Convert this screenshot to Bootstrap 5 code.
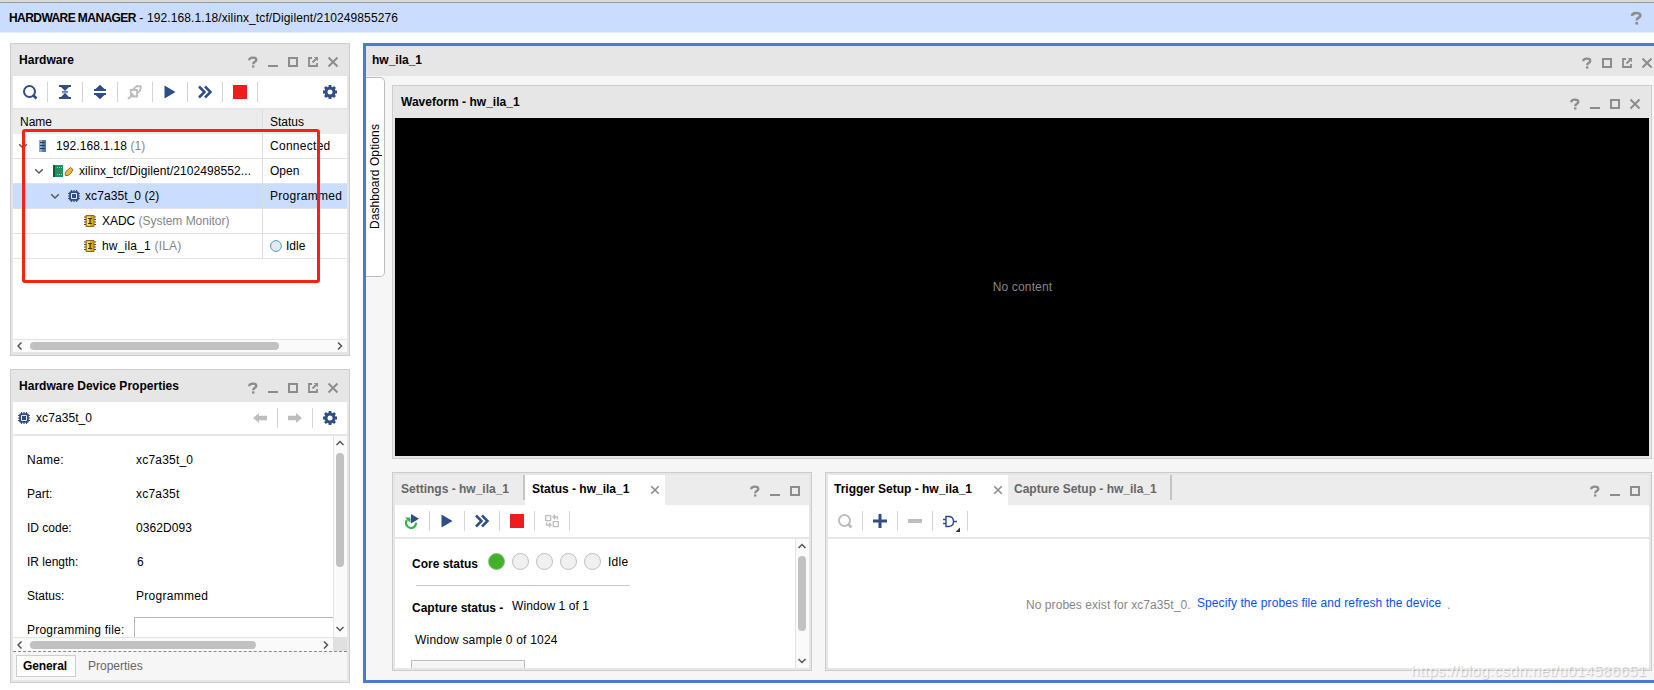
<!DOCTYPE html>
<html lang="en">
<head>
<meta charset="utf-8">
<title>Hardware Manager</title>
<link href="https://cdn.jsdelivr.net/npm/bootstrap@5.3.0/dist/css/bootstrap.min.css" rel="stylesheet">
<script src="https://cdn.jsdelivr.net/npm/bootstrap@5.3.0/dist/js/bootstrap.bundle.min.js"></script>
<style>
body{width:1654px;height:690px;overflow:hidden;background:#fff;color:#000;font:12px/16px "Liberation Sans",Arial,sans-serif}
svg{display:block;flex:none}
.topline{height:2px;background:#d9d9d9}
.topbar{height:31px;background:#cbddfe;border-top:1px solid #999;box-shadow:inset 0 -1px #e6eefc;padding:0 10px 1px 9px;letter-spacing:.11px}
.topbar b{letter-spacing:-.57px}
.workarea{padding:10px 0 0 10px;gap:13px}
.sidecol{width:340px;gap:13px}
.pane{border:1px solid #cdcdcd;background:#e6e6e6;padding:0 2px 2px}
.pane-a{height:313px}.pane-b{height:314px}
.pane-title{height:32px;padding:0 8px 0 6px;font-weight:700;letter-spacing:.02px}
.pane-title>span{padding-bottom:1px}
.winbtns{gap:8px;margin-top:4px;margin-left:auto;color:#8c8c8c}
.tools{height:32px;background:#fff;color:#2f4d86}
.cell{width:35px;height:20px;border-right:1px solid #d4d4d4;display:flex;align-items:center;justify-content:center}
.cell.last{border:0;width:34px}
.rule2{height:2px;background:#e6e6e6}
.off{color:#bdbdbd}
.c1{width:250px;height:100%;border-right:1px solid #dedede}
.c2{padding-left:7px}
.thead-row{height:24px;background:#ececec}
.thead-row .c1{padding-left:7px}
.trow{height:25px;border-bottom:1px solid #e3e3e3}
.trow.sel{background:#cbddfe}
.wide-a{letter-spacing:.08px}.wide-b{letter-spacing:.28px}.wide-c{letter-spacing:.2px}
.g{color:#868686}
.hbar{height:13px;background:#fafafa;border-top:1px solid #e3e3e3;padding:0 4px;color:#555}
.thumb-h{height:8px;margin-left:7px;border-radius:4px;background:#c1c1c1}
.vbar{width:14px;background:#fafafa;border-left:1px solid #e3e3e3;padding:4px 2px 5px 0;color:#555}
.thumb-v{width:8px;margin-top:7px;border-radius:4px;background:#c1c1c1}
.mark-box{position:absolute;left:22px;top:129px;width:298px;height:154px;border:3px solid #ff2012;border-radius:3px}
.prop{height:34px;padding-left:14px}
.prop>span:first-child{width:107px}
.prop>span+span{padding-left:2px}
.field{height:40px;border:1px solid #b5b5b5;border-right:0;align-self:flex-start;margin-top:4px}
.foot{height:29px;border-top:1px dashed #8a8a8a;background:#f6f6f6;padding:3px 3px 0}
.foot .on{width:60px;height:22px;border:1px solid #cdcdcd;background:#fff;font-weight:700;letter-spacing:-.1px;line-height:20px;padding-left:6px}
.foot .un{color:#666;line-height:22px;margin-left:12px}
.mainbox{width:1291px;height:640px;border:3px solid #4a7bce;border-right:0;background:#f6f6f6}
.main-title{height:30px;background:#e6e6e6;padding:0 1px 0 6px;font-weight:700}
.main-title>span{padding-bottom:3px}
.main-title .winbtns{margin-top:3px}
.dash{width:19px;height:200px;margin:1px 1px 0 0;border:1px solid #bdbdbd;border-left:0;border-radius:0 5px 5px 0;background:#fff}
.dash span{writing-mode:vertical-rl;transform:rotate(180deg);letter-spacing:.1px;line-height:18px}
.stack{margin:9px 0 0 6px;width:1260px;gap:13px}
.wave{height:374px}
.wavearea{background:#000;color:#868686;height:338px;letter-spacing:.15px;padding-left:1px}
.low{height:199px;padding-top:2px}
.tabs{height:30px;background:#ececec;font-weight:700}
.tab{height:30px;padding:0 0 2px 6px;display:flex;align-items:center;color:#666}
.tab.on{background:#fff;color:#000}
.tab svg{margin:1px 5px 0 auto;color:#8c8c8c}
.tsep{width:2px;height:25px;background:#c4c4c4}
.tabs .winbtns{margin-right:8px;margin-top:1px}
.led{width:17px;height:17px;border-radius:50%;border:1px solid #bdbdbd;background:#f0f0f0;margin-right:7px}
.led.green{background:#43b02a;border-color:#8fbf85}
.divider{width:214px;height:1px;background:#c8c8c8;margin-left:4px}
.stubbtn{width:114px;height:24px;border:1px solid #bdbdbd;background:#f5f5f5;margin-left:-1px}
.lnk{color:#0a50f0;letter-spacing:.09px}
.wm{position:absolute;left:1411px;top:661px;font-size:15px;line-height:20px;letter-spacing:.43px;color:rgba(255,255,255,.75);text-shadow:1px 1px 1px rgba(120,120,120,.4);white-space:nowrap}
</style>
</head>
<body class="position-relative">
<svg width="0" height="0" class="position-absolute">
<defs>
<symbol id="q" viewBox="0 0 12 12"><path d="M2.200 4.200C2.300 2.300 4 1.700 5.900 1.700C8 1.700 9.300 2.500 9.300 3.900C9.300 5.900 6.200 5.600 6.200 8.200" fill="none" stroke="currentColor" stroke-width="2.300"/><path d="M5 9.400h2.400v2.200H5z" fill="currentColor"/></symbol>
<symbol id="min" viewBox="0 0 12 12"><path d="M1 9h10v2H1z" fill="currentColor"/></symbol>
<symbol id="max" viewBox="0 0 12 12"><path d="M2 2h8v8H2z" fill="none" stroke="currentColor" stroke-width="2"/></symbol>
<symbol id="flt" viewBox="0 0 12 12"><path d="M5 2H2v8h8V7" fill="none" stroke="currentColor" stroke-width="1.800"/><path d="M5.500 6.500L9 3" stroke="currentColor" stroke-width="1.800"/><path d="M6.800 1H11v4.200z" fill="currentColor"/></symbol>
<symbol id="x" viewBox="0 0 12 12"><path d="M1.500 1.500l9 9M10.500 1.500l-9 9" stroke="currentColor" stroke-width="1.900"/></symbol>
<symbol id="lens" viewBox="0 0 16 16"><circle cx="7.500" cy="7.500" r="5.500" fill="none" stroke="currentColor" stroke-width="2"/><path d="M11 11l3.500 3.500" stroke="currentColor" stroke-width="2.600"/></symbol>
<symbol id="gear" viewBox="0 0 16 16"><circle cx="8" cy="8" r="4" fill="none" stroke="currentColor" stroke-width="3"/><path d="M8 1v2.500M8 12.500V15M1 8h2.500M12.500 8H15M3 3l2 2M11 11l2 2M13 3l-2 2M5 11l-2 2" stroke="currentColor" stroke-width="2.800"/></symbol>
<symbol id="play" viewBox="0 0 16 16"><path d="M2.500 1.500L13.500 8 2.500 14.500z" fill="currentColor"/></symbol>
<symbol id="ff" viewBox="0 0 16 16"><path d="M2 2.500L7.500 8 2 13.500M8 2.500L13.500 8 8 13.500" fill="none" stroke="currentColor" stroke-width="2.500"/></symbol>
<symbol id="stop" viewBox="0 0 16 16"><path d="M1 1h14v14H1z" fill="#ee1c1c"/></symbol>
<symbol id="chip" viewBox="0 0 12 12"><path d="M3.500 0v12M6 0v12M8.500 0v12M0 3.500h12M0 6h12M0 8.500h12" stroke="currentColor" stroke-width="1.200"/><rect x="1.200" y="1.200" width="9.600" height="9.600" rx="1.500" fill="currentColor"/><path d="M3.500 3.500h5v5h-5z" fill="none" stroke="#e8eefa" stroke-width="1"/></symbol>
<symbol id="core" viewBox="0 0 12 12"><path d="M0 2h12M0 4.500h12M0 7h12M0 9.500h12" stroke="#4b4430" stroke-width="1"/><path d="M2 .5h8v11H2z" fill="#d6a625" stroke="#8a6a1a" stroke-width="1"/><path d="M3 1.500h3v9H3z" fill="#f6dc74"/><path d="M4 3.500h4M4 8.500h4M6 3.500v5" stroke="#3d2f08" stroke-width="1.200"/></symbol>
<symbol id="chev" viewBox="0 0 10 10"><path d="M1.200 3.200L5 7l3.800-3.800" fill="none" stroke="currentColor" stroke-width="1.400"/></symbol>
<symbol id="arr" viewBox="0 0 14 12"><path d="M0 6l6-5v2.800h8v4.400H6V11z" fill="currentColor"/></symbol>
</defs></svg>

<div class="topline"></div>
<header class="topbar d-flex align-items-center justify-content-between">
  <div style="white-space:pre"><b>HARDWARE MANAGER</b> - 192.168.1.18/xilinx_tcf/Digilent/210249855276</div>
  <svg width="15" height="14" color="#8c8c8c"><use href="#q" width="15" height="14"/></svg>
</header>

<main class="workarea d-flex">
  <div class="sidecol d-flex flex-column flex-shrink-0">
    <section class="pane pane-a d-flex flex-column">
      <div class="pane-title d-flex align-items-center"><span>Hardware</span>
        <div class="winbtns d-flex"><svg width="12" height="12"><use href="#q"/></svg><svg width="12" height="12"><use href="#min"/></svg><svg width="12" height="12"><use href="#max"/></svg><svg width="12" height="12"><use href="#flt"/></svg><svg width="12" height="12"><use href="#x"/></svg></div>
      </div>
      <div class="tools d-flex align-items-center">
        <div class="cell"><svg width="16" height="16"><use href="#lens"/></svg></div>
        <div class="cell"><svg width="16" height="16" viewBox="0 0 16 16" fill="currentColor"><path d="M2 1h12v2H2zM2 13h12v2H2zM4 3h8L8 7zM4 13h8L8 9zM5 7h6v.7H5zM5 8.500h6v.7H5z"/></svg></div>
        <div class="cell"><svg width="16" height="16" viewBox="0 0 16 16" fill="currentColor"><path d="M3.500 5h9L8 .8zM3.500 11h9L8 15.200zM2 5h12v2H2zM2 9h12v2H2z"/></svg></div>
        <div class="cell off"><svg width="16" height="16" viewBox="0 0 16 16" fill="none" stroke="currentColor" stroke-width="1.800"><path d="M3.500 6h6.500v6.500H4zM6 5.500l4-3.500 4 .5-1 4-3 3M1 15l3-3M4 9l3 3"/></svg></div>
        <div class="cell"><svg width="16" height="16"><use href="#play"/></svg></div>
        <div class="cell"><svg width="16" height="16"><use href="#ff"/></svg></div>
        <div class="cell"><svg width="16" height="16"><use href="#stop"/></svg></div>
        <div class="cell last ms-auto"><svg width="16" height="16"><use href="#gear"/></svg></div>
      </div>
      <div class="rule2"></div>
      <div class="thead-row d-flex align-items-center"><div class="c1 d-flex align-items-center">Name</div><div class="c2">Status</div></div>
      <div class="bg-white flex-grow-1">
        <div class="trow d-flex align-items-center"><div class="c1 d-flex align-items-center"><svg style="margin-left:5px" width="10" height="10" color="#555"><use href="#chev"/></svg>
          <svg style="margin:0 10px 0 11px" width="7" height="12" viewBox="0 0 7 12"><path d="M0 0h7v12H0z" fill="#5a7ba6"/><path d="M0 0h3v12H0z" fill="#8faacb"/><path d="M1 2.500h5M1 5.500h5M1 8.500h5" stroke="#263e63"/></svg><span class="wide-a">192.168.1.18&nbsp;<span class="g">(1)</span></span></div><div class="c2 wide-b">Connected</div></div>
        <div class="trow d-flex align-items-center"><div class="c1 d-flex align-items-center"><svg style="margin:0 9px 0 21px" width="10" height="10" color="#555"><use href="#chev"/></svg>
          <svg style="margin-right:5px" width="21" height="12" viewBox="0 0 21 12"><path d="M0 0h10v12H0z" fill="#119664"/><path d="M0 0h2v12H0z" fill="#0a5b3d"/><path d="M4 2.500h5M4 9.500h5" stroke="#8cd29d" stroke-dasharray="1 1"/><path d="M4 4h4v4H4z" fill="#4f7f55"/><path d="M4 5h4M4 7.500h4" stroke="#a04b35" stroke-dasharray="1 1"/><path d="M12.500 10.500c-1-2 0-4 2-5.500l3-2.500 2.500 2-2 3.500c-1.500 2-3.500 3-5.500 2.500z" fill="#f4b63c" stroke="#7a5c20" stroke-width=".9"/></svg><span class="wide-a">xilinx_tcf/Digilent/2102498552...</span></div><div class="c2">Open</div></div>
        <div class="trow sel d-flex align-items-center"><div class="c1 d-flex align-items-center"><svg style="margin:0 8px 0 37px" width="10" height="10" color="#555"><use href="#chev"/></svg><svg style="margin-right:5px" width="12" height="12" color="#2f4d86"><use href="#chip"/></svg><span class="wide-a">xc7a35t_0 (2)</span></div><div class="c2 wide-b">Programmed</div></div>
        <div class="trow d-flex align-items-center"><div class="c1 d-flex align-items-center"><svg style="margin:0 6px 0 71px" width="12" height="12"><use href="#core"/></svg><span style="letter-spacing:-.03px">XADC&nbsp;<span class="g">(System Monitor)</span></span></div></div>
        <div class="trow d-flex align-items-center"><div class="c1 d-flex align-items-center"><svg style="margin:0 6px 0 71px" width="12" height="12"><use href="#core"/></svg><span class="wide-c">hw_ila_1&nbsp;<span class="g">(ILA)</span></span></div><div class="c2 d-flex align-items-center"><svg width="12" height="12" style="margin-right:4px"><circle cx="6" cy="6" r="5.400" fill="#e6eaee" stroke="#4d9cc9"/></svg>Idle</div></div>
      </div>
      <div class="hbar d-flex align-items-center"><svg width="6" height="8"><path d="M4.500 0.500L1 4l3.500 3.500" fill="none" stroke="currentColor" stroke-width="1.500"/></svg><div class="thumb-h" style="width:249px"></div><svg class="ms-auto" width="6" height="8"><path d="M1 .5L4.500 4 1 7.500" fill="none" stroke="currentColor" stroke-width="1.500"/></svg></div>
      <div style="height:1px"></div>
    </section>

    <section class="pane pane-b d-flex flex-column">
      <div class="pane-title d-flex align-items-center"><span>Hardware Device Properties</span>
        <div class="winbtns d-flex"><svg width="12" height="12"><use href="#q"/></svg><svg width="12" height="12"><use href="#min"/></svg><svg width="12" height="12"><use href="#max"/></svg><svg width="12" height="12"><use href="#flt"/></svg><svg width="12" height="12"><use href="#x"/></svg></div>
      </div>
      <div class="tools d-flex align-items-center">
        <svg style="margin:0 6px 0 5px" width="12" height="12"><use href="#chip"/></svg><span class="text-black wide-a">xc7a35t_0</span>
        <div class="cell off ms-auto"><svg width="14" height="12"><use href="#arr"/></svg></div>
        <div class="cell off"><svg width="14" height="12" style="transform:scaleX(-1)"><use href="#arr"/></svg></div>
        <div class="cell last"><svg width="16" height="16"><use href="#gear"/></svg></div>
      </div>
      <div class="rule2"></div>
      <div class="d-flex bg-white overflow-hidden" style="height:201px">
        <div class="flex-grow-1" style="padding-top:7px">
          <div class="prop d-flex align-items-center"><span class="wide-b">Name:</span><span class="wide-c">xc7a35t_0</span></div>
          <div class="prop d-flex align-items-center"><span>Part:</span><span class="wide-c">xc7a35t</span></div>
          <div class="prop d-flex align-items-center"><span>ID code:</span><span class="wide-a">0362D093</span></div>
          <div class="prop d-flex align-items-center"><span>IR length:</span><span style="padding-left:3px">6</span></div>
          <div class="prop d-flex align-items-center"><span>Status:</span><span class="wide-b">Programmed</span></div>
          <div class="prop d-flex align-items-center"><span class="wide-c text-nowrap">Programming file:</span><div class="field flex-grow-1"></div></div>
        </div>
        <div class="vbar d-flex flex-column align-items-center"><svg width="8" height="6"><path d="M.5 5L4 1.500 7.500 5" fill="none" stroke="currentColor" stroke-width="1.500"/></svg><div class="thumb-v" style="height:114px"></div><svg class="mt-auto" width="8" height="6"><path d="M.5 1L4 4.500 7.500 1" fill="none" stroke="currentColor" stroke-width="1.500"/></svg></div>
      </div>
      <div class="d-flex"><div class="hbar flex-grow-1 d-flex align-items-center" style="height:14px"><svg width="6" height="8"><path d="M4.500 0.500L1 4l3.500 3.500" fill="none" stroke="currentColor" stroke-width="1.500"/></svg><div class="thumb-h" style="width:226px"></div><svg class="ms-auto" width="6" height="8"><path d="M1 .5L4.500 4 1 7.500" fill="none" stroke="currentColor" stroke-width="1.500"/></svg></div><div style="width:14px;background:#e0e0e0"></div></div>
      <div class="foot d-flex"><div class="on">General</div><div class="un">Properties</div></div>
    </section>
  </div>

  <section class="mainbox flex-shrink-0">
    <div class="main-title d-flex align-items-center"><span>hw_ila_1</span>
      <div class="winbtns d-flex"><svg width="12" height="12"><use href="#q"/></svg><svg width="12" height="12"><use href="#max"/></svg><svg width="12" height="12"><use href="#flt"/></svg><svg width="12" height="12"><use href="#x"/></svg></div>
    </div>
    <div class="d-flex align-items-start">
      <div class="dash d-flex align-items-center justify-content-center"><span>Dashboard Options</span></div>
      <div class="stack d-flex flex-column">
        <section class="pane wave">
          <div class="pane-title d-flex align-items-center"><span>Waveform - hw_ila_1</span>
            <div class="winbtns d-flex"><svg width="12" height="12"><use href="#q"/></svg><svg width="12" height="12"><use href="#min"/></svg><svg width="12" height="12"><use href="#max"/></svg><svg width="12" height="12"><use href="#x"/></svg></div>
          </div>
          <div class="wavearea d-flex align-items-center justify-content-center">No content</div>
        </section>
        <div class="d-flex" style="gap:13px">
          <section class="pane low" style="width:420px">
            <div class="tabs d-flex">
              <div class="tab" style="width:128px">Settings - hw_ila_1</div><div class="tsep"></div>
              <div class="tab on" style="width:140px;padding-left:7px"><span>Status - hw_ila_1</span><svg width="10" height="10" viewBox="0 0 12 12"><use href="#x"/></svg></div>
              <div class="winbtns d-flex align-items-center"><svg width="12" height="12"><use href="#q"/></svg><svg width="12" height="12"><use href="#min"/></svg><svg width="12" height="12"><use href="#max"/></svg></div>
            </div>
            <div class="tools d-flex align-items-center">
              <div class="cell"><svg width="16" height="16" viewBox="0 0 16 16"><path d="M3 7A5 5 0 1 0 12 9.500" fill="none" stroke="#35b34a" stroke-width="2.200"/><path d="M1 4.500h5.500V10z" fill="#35b34a"/><path d="M7 1l8 4.700-8 4.700z" fill="#2f4d86"/></svg></div>
              <div class="cell"><svg width="16" height="16"><use href="#play"/></svg></div>
              <div class="cell"><svg width="16" height="16"><use href="#ff"/></svg></div>
              <div class="cell"><svg width="16" height="16"><use href="#stop"/></svg></div>
              <div class="cell off"><svg width="16" height="16" viewBox="0 0 16 16" fill="none" stroke="currentColor" stroke-width="1.300"><path d="M1.700 2.700h5v5h-5zM9.300 8.700h5v5h-5zM13.500 6.500V4H9M11 2L9 4l2 2M2.500 9.500V12H7M5 10l2 2-2 2"/></svg></div>
            </div>
            <div class="rule2"></div>
            <div class="d-flex bg-white overflow-hidden" style="height:129px">
              <div class="flex-grow-1" style="padding:14px 0 0 17px">
                <div class="d-flex" style="height:32px"><b style="width:76px;padding-top:3px">Core status</b><i class="led green"></i><i class="led"></i><i class="led"></i><i class="led"></i><i class="led"></i><span class="wide-b" style="padding-top:1px">Idle</span></div>
                <div class="divider"></div>
                <div class="d-flex" style="margin-top:12px;height:34px"><b style="width:100px;padding-top:2px">Capture status -</b><span class="wide-a">Window 1 of 1</span></div>
                <div class="wide-c" style="padding-left:3px;height:28px">Window sample 0 of 1024</div>
                <div class="stubbtn"></div>
              </div>
              <div class="vbar d-flex flex-column align-items-center"><svg width="8" height="6"><path d="M.5 5L4 1.500 7.500 5" fill="none" stroke="currentColor" stroke-width="1.500"/></svg><div class="thumb-v" style="height:75px"></div><svg style="margin-top:auto;margin-bottom:-1px" width="8" height="6"><path d="M.5 1L4 4.500 7.500 1" fill="none" stroke="currentColor" stroke-width="1.500"/></svg></div>
            </div>
          </section>
          <section class="pane low" style="width:827px">
            <div class="tabs d-flex">
              <div class="tab on" style="width:180px"><span>Trigger Setup - hw_ila_1</span><svg width="10" height="10" viewBox="0 0 12 12"><use href="#x"/></svg></div>
              <div class="tab" style="width:162px">Capture Setup - hw_ila_1</div><div class="tsep"></div>
              <div class="winbtns d-flex align-items-center"><svg width="12" height="12"><use href="#q"/></svg><svg width="12" height="12"><use href="#min"/></svg><svg width="12" height="12"><use href="#max"/></svg></div>
            </div>
            <div class="tools d-flex align-items-center">
              <div class="cell off"><svg width="16" height="16"><use href="#lens"/></svg></div>
              <div class="cell"><svg width="16" height="16"><path d="M8 1v14M1 8h14" stroke="currentColor" stroke-width="3"/></svg></div>
              <div class="cell off"><svg width="16" height="16"><path d="M1 8h14" stroke="currentColor" stroke-width="4"/></svg></div>
              <div class="cell"><svg width="20" height="20" viewBox="0 0 20 20" style="margin:3px 0 0 2px"><path d="M5 3.500h2.500c3 0 5 2 5 5s-2 5-5 5H5zM2 6.500h3M2 10.500h3M12.500 8.500H16" fill="none" stroke="currentColor" stroke-width="1.400"/><path d="M19 14.500V19h-4.500z" fill="#333"/></svg></div>
            </div>
            <div class="rule2"></div>
            <div class="bg-white g d-flex" style="height:129px;padding:56px 0 0 198px"><span style="width:171px;padding-top:2px;letter-spacing:.06px">No probes exist for xc7a35t_0.</span><span class="lnk" style="width:250px">Specify the probes file and refresh the device</span><span style="padding-top:2px">.</span></div>
          </section>
        </div>
      </div>
    </div>
  </section>
</main>
<div class="mark-box"></div>
<div class="wm">https://blog.csdn.net/u014586651</div>
</body>
</html>
